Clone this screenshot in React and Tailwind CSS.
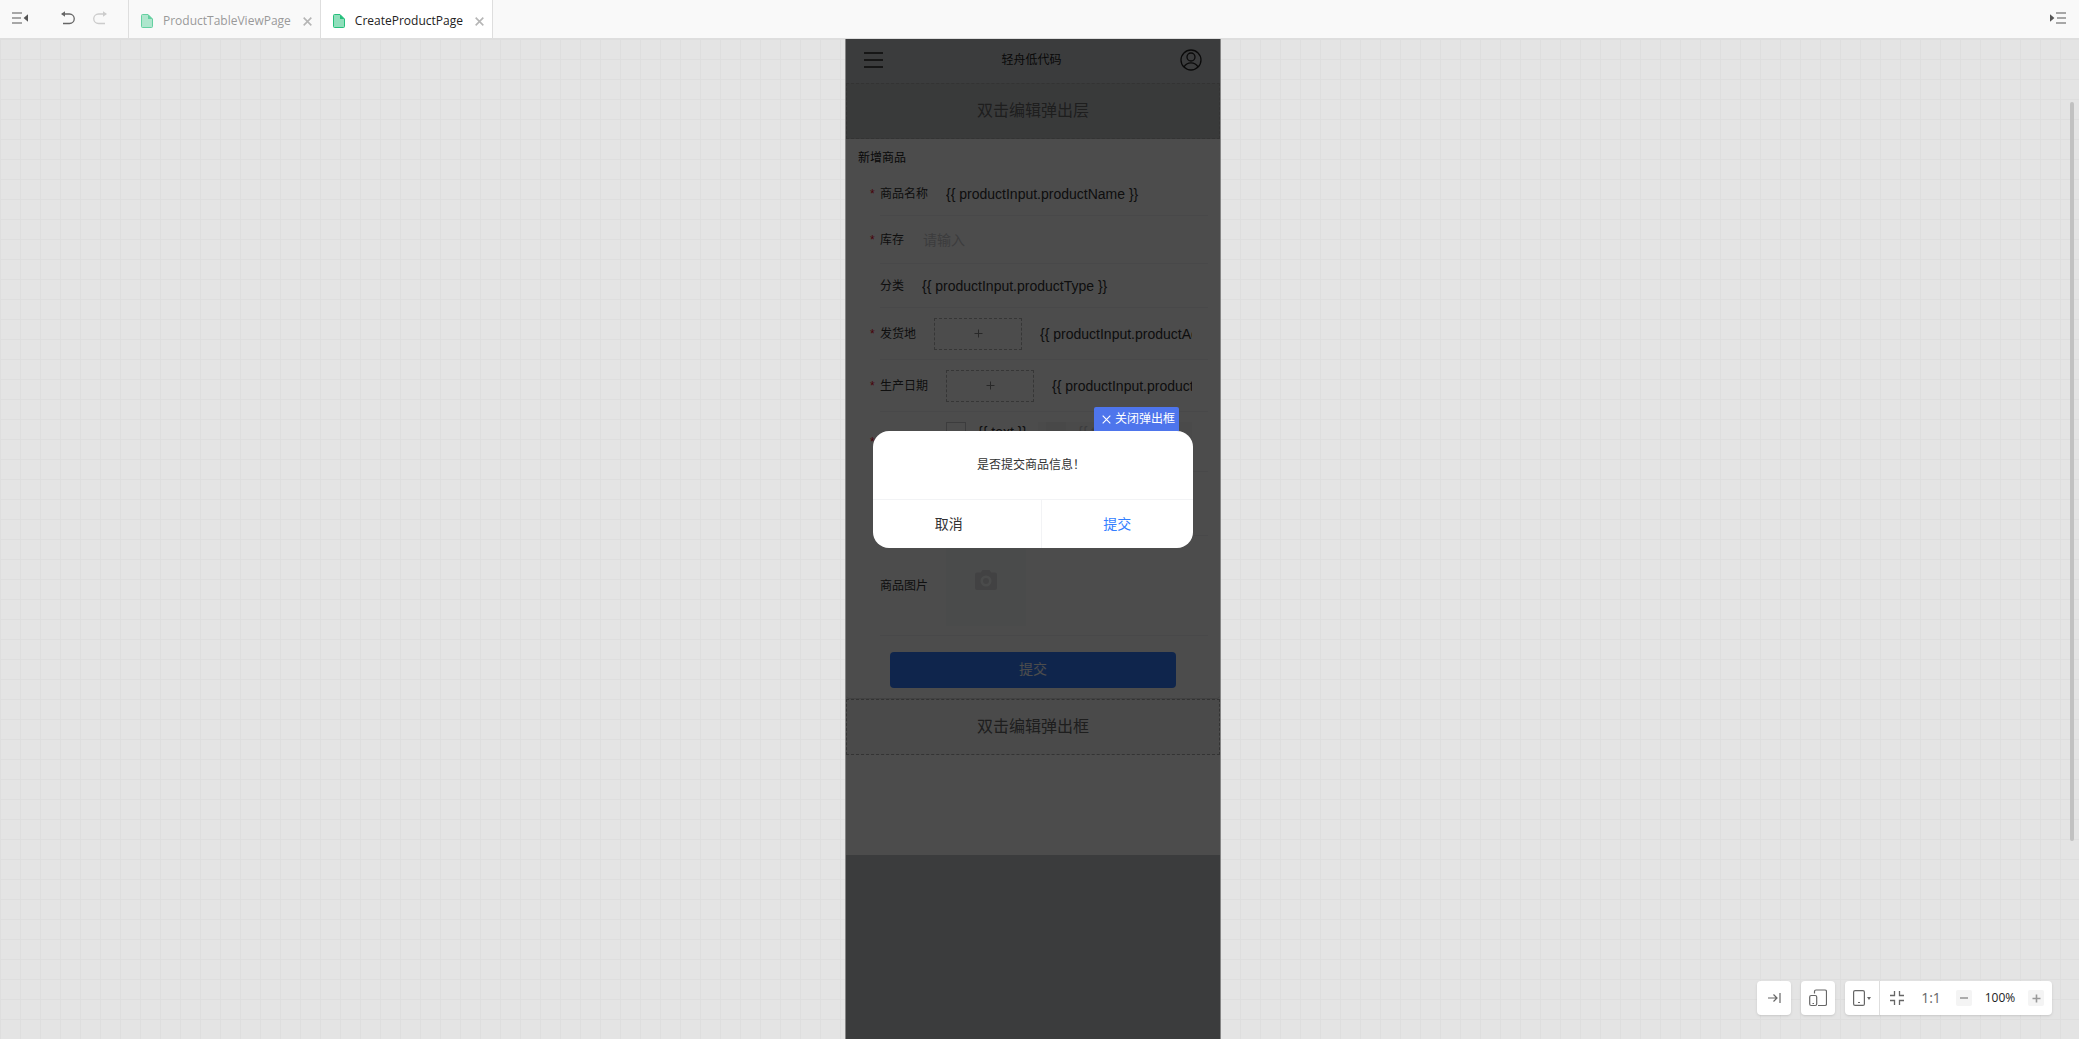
import React from 'react';

const MenuIcon = ({ className }) => (
  <svg width="16" height="12" viewBox="0 0 16 12" className={className} aria-hidden="true">
    <path d="M0 1h10M0 6h9M0 11h10" stroke="#8c8c8c" strokeWidth="1.6" />
    <path d="M16 2.2v7.6L11.6 6z" fill="#555" />
  </svg>
);

const UndoIcon = ({ className }) => (
  <svg width="14" height="14" viewBox="0 0 14 14" fill="none" className={className} aria-hidden="true">
    <path d="M1.5 3H8.500a4.750 4.750 0 0 1 0 9.500H2" stroke="currentColor" strokeWidth="1.3" />
    <path d="M4 0.3v5.4L0 3z" fill="currentColor" />
  </svg>
);

const FileIcon = ({ className }) => (
  <svg width="12" height="14" viewBox="0 0 12 14" className={className} aria-hidden="true">
    <path d="M1.5 0.5H7l4.5 4.5v7.5a1 1 0 0 1-1 1h-9a1 1 0 0 1-1-1v-11a1 1 0 0 1 1-1z" fill="#8fdfbb" stroke="#26bf7c" />
    <path d="M7 0.5V5h4.5z" fill="#26bf7c" />
  </svg>
);

const CloseIcon = ({ size = 8, width = 1.4 }) => (
  <svg width={size} height={size} viewBox="0 0 8 8" fill="none" aria-hidden="true">
    <path d="M0.6 0.6l6.8 6.8M7.4 0.6L0.6 7.4" stroke="currentColor" strokeWidth={width} />
  </svg>
);

const PlusIcon = ({ width = 1 }) => (
  <svg width="9" height="9" viewBox="0 0 9 9" fill="none" aria-hidden="true">
    <path d="M4.5 0.5v8M0.5 4.5h8" stroke="currentColor" strokeWidth={width} />
  </svg>
);

const PageTab = ({ name, active }) => (
  <div
    className={
      active
        ? 'flex items-center border-x border-[#dedede] bg-white pl-3 pr-2 pt-1 text-[#222]'
        : 'flex items-center border-l border-[#dedede] pl-3 pr-2 pt-1 text-[#999]'
    }
  >
    <FileIcon className={active ? 'mr-[10px]' : 'mr-[10px] opacity-70'} />
    <button type="button" className="mr-3 text-xs leading-4">{name}</button>
    <button type="button" aria-label="close" className="text-[#b5b5b5]">
      <CloseIcon size={9} />
    </button>
  </div>
);

const TopBar = () => (
  <header className="flex h-[39px] shrink-0 border-b border-[#dedede] bg-[#f9f9f9]">
    <div className="flex w-32 items-center pl-3 pb-0.5">
      <button type="button" aria-label="collapse left">
        <MenuIcon />
      </button>
      <button type="button" aria-label="undo" className="ml-[33px] text-[#666]">
        <UndoIcon />
      </button>
      <button type="button" aria-label="redo" className="ml-[18px] text-[#ccc]">
        <UndoIcon className="-scale-x-100" />
      </button>
    </div>
    <PageTab name="ProductTableViewPage" />
    <PageTab name="CreateProductPage" active />
    <button type="button" aria-label="collapse right" className="ml-auto pb-0.5 pr-[13px]">
      <MenuIcon className="-scale-x-100" />
    </button>
  </header>
);

const FormRow = ({ label, htmlFor, required, height, children }) => (
  <div className={`flex pl-6 pr-3 ${height}`}>
    <span className="flex w-[10px] shrink-0 items-center text-xs text-[#ee0a24]">{required ? '*' : ''}</span>
    <div className="flex min-w-0 flex-1 items-center gap-[18px] border-b border-[#f0f1f3] pr-4">
      <label htmlFor={htmlFor} className="shrink-0 text-xs leading-5 text-[#333]">{label}</label>
      {children}
    </div>
  </div>
);

const Expression = ({ children }) => (
  <span className="min-w-0 flex-1 overflow-hidden whitespace-nowrap text-sm leading-6 text-[#323233]">{children}</span>
);

const Slot = () => (
  <div className="flex h-8 w-[88px] shrink-0 items-center justify-center border border-dashed border-[#b4b4b4] text-[#888]">
    <PlusIcon />
  </div>
);

const PopupSlot = ({ children }) => (
  <div className="flex h-14 items-center justify-center border border-dashed border-[#aaa] bg-black/[3%] text-base text-[#666]">
    {children}
  </div>
);

const ProductForm = () => (
  <form className="rounded-b border-b border-[#dcdcdc] bg-white pb-[10px]" onSubmit={(e) => e.preventDefault()}>
    <h2 className="px-3 pb-1 pt-[9px] text-xs leading-5 text-[#222]">新增商品</h2>
    <FormRow label="商品名称" required height="h-11">
      <Expression>{'{{ productInput.productName }}'}</Expression>
    </FormRow>
    <FormRow label="库存" htmlFor="stock" required height="h-12">
      <input
        id="stock"
        type="text"
        placeholder="请输入"
        className="min-w-0 flex-1 bg-transparent pl-px text-sm leading-6 text-[#323233] outline-none placeholder:text-[#c8c9cc]"
      />
    </FormRow>
    <FormRow label="分类" height="h-11">
      <Expression>{'{{ productInput.productType }}'}</Expression>
    </FormRow>
    <FormRow label="发货地" required height="h-13">
      <Slot />
      <Expression>{'{{ productInput.productAddress }}'}</Expression>
    </FormRow>
    <FormRow label="生产日期" required height="h-13">
      <Slot />
      <Expression>{'{{ productInput.productDate }}'}</Expression>
    </FormRow>
    <FormRow required height="h-15">
      <div className="ml-12 flex min-w-0 flex-1 self-start pt-[10px] text-sm leading-5">
        <label className="flex w-23 shrink-0 items-center gap-3 text-[#323233]">
          <input type="checkbox" className="h-5 w-5 appearance-none border border-[#c8c9cc]" />
          {'{{ text }}'}
        </label>
        <label className="flex min-w-0 flex-1 items-center gap-3 overflow-hidden whitespace-nowrap bg-[#f7f7f7] pl-2 text-[#c8c9cc]">
          <input type="checkbox" className="h-5 w-5 shrink-0 appearance-none bg-[#f2f2f2]" />
          {'{{ text }}'}
        </label>
      </div>
    </FormRow>
    <FormRow height="h-16" />
    <FormRow label="商品图片" height="h-25">
      <button type="button" aria-label="上传" className="flex h-20 w-20 justify-center bg-[#f9fafb] pt-6">
        <svg width="22" height="20" viewBox="0 0 22 20" aria-hidden="true">
          <path
            fillRule="evenodd"
            fill="#dcdee0"
            d="M7.5 0h7l1.8 2.5H20a2 2 0 0 1 2 2V18a2 2 0 0 1-2 2H2a2 2 0 0 1-2-2V4.500a2 2 0 0 1 2-2h3.700zM11 5.500a5.500 5.500 0 1 0 0 11 5.500 5.500 0 0 0 0-11zm0 2.500a3 3 0 1 1 0 6 3 3 0 0 1 0-6z"
          />
        </svg>
      </button>
    </FormRow>
    <div className="px-11 pt-4">
      <button type="submit" className="h-9 w-full rounded bg-[#337eff] pb-0.5 text-sm text-white">提交</button>
    </div>
  </form>
);

const ConfirmDialog = () => (
  <div role="dialog" className="absolute left-1/2 top-[392px] w-80 -translate-x-1/2 rounded-2xl bg-white">
    <button
      type="button"
      className="absolute bottom-full right-[14px] flex h-6 items-center gap-1 rounded-t-xs bg-[#4e75ec] pl-2 pr-1 text-xs whitespace-nowrap text-white"
    >
      <CloseIcon size={9} width={1} />
      关闭弹出框
    </button>
    <p className="pb-6 pl-1 pr-2 pt-6 text-center text-xs leading-5 text-[#333]">是否提交商品信息！</p>
    <div className="flex gap-4 border-t border-[#f2f3f5] text-sm">
      <button type="button" className="h-12 flex-1 text-[#323233]">取消</button>
      <button type="button" className="h-12 flex-1 border-l border-[#f2f3f5] text-[#337eff]">提交</button>
    </div>
  </div>
);

const PhonePreview = () => (
  <div className="relative w-[376px] overflow-hidden border-x border-[#858585] bg-[#c5c8cb]">
    <div className="flex h-11 items-center justify-between px-[18px] pb-0.5 text-[#222]">
      <svg width="19" height="16" viewBox="0 0 19 16" aria-hidden="true">
        <path d="M0 1h19M0 8h19M0 15h19" stroke="currentColor" strokeWidth="1.300" />
      </svg>
      <span className="text-xs">轻舟低代码</span>
      <svg width="22" height="22" viewBox="0 0 22 22" fill="none" stroke="currentColor" strokeWidth="1.300" aria-hidden="true">
        <circle cx="11" cy="11" r="10" />
        <circle cx="11" cy="8" r="4" />
        <path d="M4 18c1.500-3 4-4.200 7-4.200s5.500 1.200 7 4.200" />
      </svg>
    </div>
    <PopupSlot>双击编辑弹出层</PopupSlot>
    <div className="bg-white pb-25">
      <ProductForm />
      <PopupSlot>双击编辑弹出框</PopupSlot>
    </div>
    <div className="absolute inset-0 bg-black/70" />
    <ConfirmDialog />
  </div>
);

const CanvasTools = () => (
  <div className="absolute bottom-6 right-[27px] flex gap-[10px] text-[#666]">
    <button type="button" aria-label="collapse" className="flex h-[34px] w-[34px] items-center justify-center rounded bg-white shadow-sm">
      <svg width="13" height="12" viewBox="0 0 13 12" fill="none" stroke="currentColor" strokeWidth="1.200" aria-hidden="true">
        <path d="M0 6h8.500M5.500 2.500L9 6l-3.500 3.500M12 1v10" />
      </svg>
    </button>
    <button type="button" aria-label="devices" className="flex h-[34px] w-[34px] items-center justify-center rounded bg-white shadow-sm">
      <svg width="18" height="18" viewBox="0 0 18 18" fill="none" stroke="currentColor" strokeWidth="1.200" aria-hidden="true">
        <path d="M5.500 4.500V2.500a1.500 1.500 0 0 1 1.500-1.500h9a1.500 1.500 0 0 1 1.500 1.500v12.500a1.500 1.500 0 0 1-1.500 1.500H9" />
        <rect x="0.700" y="6.500" width="7" height="10" rx="1.500" />
        <path d="M3.500 14.500h1.500" />
      </svg>
    </button>
    <div className="flex h-[34px] items-center rounded bg-white pr-2 shadow-sm">
      <button type="button" aria-label="device" className="flex h-full w-[35px] items-center justify-center gap-0.5 border-r border-[#dedede]">
        <svg width="12" height="16" viewBox="0 0 12 16" fill="none" stroke="currentColor" strokeWidth="1.200" aria-hidden="true">
          <rect x="0.600" y="0.600" width="10.800" height="14.800" rx="1.500" />
          <path d="M5 12.500h2" />
        </svg>
        <svg width="4" height="3" viewBox="0 0 4 3" aria-hidden="true">
          <path d="M0 0h4L2 3z" fill="currentColor" />
        </svg>
      </button>
      <button type="button" aria-label="fit" className="flex w-[34px] justify-center">
        <svg width="14" height="14" viewBox="0 0 14 14" fill="none" stroke="currentColor" strokeWidth="1.300" aria-hidden="true">
          <path d="M0 4.500h4.500V0M9.500 0v4.500H14M14 9.500H9.500V14M4.500 14V9.500H0" />
        </svg>
      </button>
      <button type="button" className="w-[34px] text-center text-sm leading-4">1:1</button>
      <button type="button" aria-label="zoom out" className="ml-2 flex h-4 w-4 items-center justify-center rounded-xs bg-[#f4f4f4] text-[#999]">
        <svg width="8" height="2" viewBox="0 0 8 2" aria-hidden="true">
          <path d="M0 1h8" stroke="currentColor" strokeWidth="1.600" />
        </svg>
      </button>
      <span className="w-14 text-center text-xs leading-4 text-[#222]">100%</span>
      <button type="button" aria-label="zoom in" className="flex h-4 w-4 items-center justify-center rounded-xs bg-[#f4f4f4] text-[#999]">
        <PlusIcon width={1.6} />
      </button>
    </div>
  </div>
);

const App = () => {
  return (
    <div className="flex h-screen flex-col overflow-hidden font-['Open_Sans','Noto_Sans_CJK_SC',sans-serif]">
      <TopBar />
      <main className="relative flex min-h-0 flex-1 justify-center bg-[#e4e4e4] bg-[linear-gradient(#dedede_1px,transparent_1px),linear-gradient(90deg,#dedede_1px,transparent_1px)] bg-[size:20px_20px] pr-[13px] font-['Liberation_Sans','Noto_Sans_CJK_SC',sans-serif]">
        <PhonePreview />
        <div className="absolute bottom-[198px] right-[5px] top-[63px] w-1 rounded-full bg-[#c1c1c1]" />
        <div className="font-['Open_Sans',sans-serif]">
          <CanvasTools />
        </div>
      </main>
    </div>
  );
};

export default App;
